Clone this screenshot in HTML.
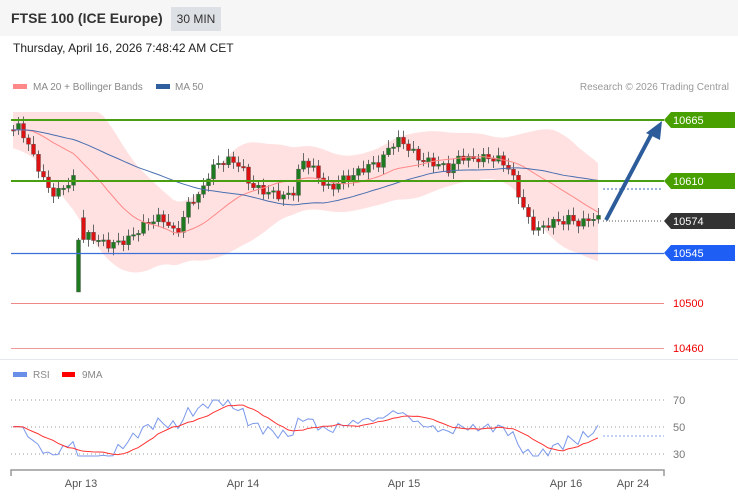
<!DOCTYPE html>
<html><head><meta charset="utf-8"><style>
body{margin:0;width:738px;height:500px;background:#fff;font-family:"Liberation Sans",sans-serif;overflow:hidden;position:relative}
.hdr{position:absolute;left:0;top:0;width:738px;height:36px;background:#f6f6f6}
.t{position:absolute;left:11px;top:10px;font-size:14px;font-weight:bold;color:#333}
.tag{position:absolute;left:171px;top:7px;width:50px;height:24px;background:#dde0e4;font-size:12px;color:#333;text-align:center;line-height:24px}
.date{position:absolute;left:13px;top:41px;font-size:12px;color:#222}
.sep{position:absolute;left:0;top:359px;width:738px;height:1px;background:#e4e8ee}
svg{position:absolute;left:0;top:0}
</style></head><body>
<div class="hdr"><div class="t">FTSE 100 (ICE Europe)</div><div class="tag">30 MIN</div></div>
<div class="date">Thursday, April 16, 2026 7:48:42 AM CET</div>
<div class="sep"></div>
<svg id="s" width="738" height="500" font-family="Liberation Sans, sans-serif">
<g id="band"></g><g id="c"></g>
<rect x="13" y="84" width="14" height="5" fill="#f88"/>
<text x="33" y="90" font-size="10" fill="#888">MA 20 + Bollinger Bands</text>
<rect x="156" y="84" width="14" height="5" fill="#2f5f9e"/>
<text x="175" y="90" font-size="10" fill="#888">MA 50</text>
<text x="729" y="90" font-size="10" fill="#999" text-anchor="end">Research © 2026 Trading Central</text>
<line x1="11" y1="120" x2="664" y2="120" stroke="#4a9e12" stroke-width="2"/>
<line x1="11" y1="181" x2="664" y2="181" stroke="#4a9e12" stroke-width="2"/>
<line x1="11" y1="253.5" x2="664" y2="253.5" stroke="#3d6fd8" stroke-width="1.2"/>
<line x1="11" y1="303.5" x2="664" y2="303.5" stroke="#e88" stroke-width="1"/>
<line x1="11" y1="348.5" x2="664" y2="348.5" stroke="#e99" stroke-width="1"/>
<line x1="603" y1="189" x2="662" y2="189" stroke="#3d6fb0" stroke-dasharray="2,2"/>
<line x1="603" y1="221" x2="662" y2="221" stroke="#555" stroke-dasharray="1,2"/>
<line x1="606" y1="220" x2="652" y2="133" stroke="#2d5c9a" stroke-width="4"/>
<polygon points="662,121 660,140 646,133" fill="#2d5c9a"/>
<polygon points="664,120 671,112 735,112 735,128 671,128" fill="#48a000"/>
<text x="673" y="124" font-size="11" fill="#fff">10665</text>
<polygon points="664,181 671,173 735,173 735,189 671,189" fill="#48a000"/>
<text x="673" y="185" font-size="11" fill="#fff">10610</text>
<polygon points="664,221 671,213 735,213 735,229 671,229" fill="#333"/>
<text x="673" y="225" font-size="11" fill="#fff">10574</text>
<polygon points="664,253 671,245 735,245 735,261 671,261" fill="#1e5ef5"/>
<text x="673" y="257" font-size="11" fill="#fff">10545</text>
<text x="673" y="307" font-size="11" fill="#e00">10500</text>
<text x="673" y="352" font-size="11" fill="#e00">10460</text>
<rect x="13" y="372" width="14" height="5" fill="#6a8fe8"/>
<text x="33" y="378" font-size="10" fill="#888">RSI</text>
<rect x="62" y="372" width="13" height="5" fill="#f00"/>
<text x="82" y="378" font-size="10" fill="#888">9MA</text>
<g stroke="#999" stroke-dasharray="1,3"><line x1="11" y1="400" x2="664" y2="400"/><line x1="11" y1="427" x2="664" y2="427"/><line x1="11" y1="454" x2="664" y2="454"/></g>
<text x="673" y="404" font-size="11" fill="#777">70</text><text x="673" y="431" font-size="11" fill="#777">50</text><text x="673" y="458" font-size="11" fill="#777">30</text>
<g id="r"></g>
<line x1="603" y1="436" x2="664" y2="436" stroke="#8aa6ee" stroke-dasharray="2,2"/>
<path d="M11,476V470H664V476" fill="none" stroke="#999" stroke-width="1.5"/>
<g font-size="11" fill="#555" text-anchor="middle"><text x="81" y="487">Apr 13</text><text x="243" y="487">Apr 14</text><text x="404" y="487">Apr 15</text><text x="566" y="487">Apr 16</text><text x="633" y="487">Apr 24</text></g>
</svg>
<script>
var K=[[13,130],[20,125],[25,140],[35,160],[45,185],[55,195],[65,185],[75,178],[80,240],[90,235],[100,242],[110,245],[120,242],[130,238],[140,228],[155,218],[165,220],[175,235],[180,225],[190,200],[200,195],[210,170],[220,162],[230,160],[240,165],[250,185],[260,190],[270,193],[285,197],[295,190],[300,160],[310,165],[320,180],[330,190],[340,180],[350,178],[360,170],[370,165],[380,163],[390,145],[400,140],[410,150],[420,160],[430,162],[440,165],[450,170],[460,155],[470,160],[480,158],[490,158],[500,160],[510,170],[520,200],[530,225],[540,230],[550,222],[560,222],[570,218],[580,225],[590,217],[601,220]];
function f(x){for(var i=1;i<K.length;i++)if(x<=K[i][0]){var a=K[i-1],b=K[i];return a[1]+(b[1]-a[1])*(x-a[0])/(b[0]-a[0]);}return 220;}
var c=document.getElementById('c'),h='';
var cl=[],xs=[];for(var x=13;x<=601;x+=5){xs.push(x);cl.push(f(x)+Math.sin(x*1.7)*4);}
var pre=[];for(var i=0;i<50;i++)pre.push(f(13)+Math.sin(i)*6);
var all=pre.concat(cl);
for(var i=0;i<cl.length;i++){var o=i?cl[i-1]:cl[0],C=cl[i],x=xs[i];var t=Math.min(o,C)-2-Math.abs(Math.sin(x))*6,b=Math.max(o,C)+2+Math.abs(Math.cos(x))*5;
if(x==78){o=292;C=240;t=238;b=292;}
var up=C<o;
h+='<line x1="'+(x+.5)+'" x2="'+(x+.5)+'" y1="'+t+'" y2="'+b+'" stroke="#666"/>';h+='<rect x="'+(x-1.5)+'" y="'+Math.min(o,C)+'" width="4" height="'+Math.max(1.5,Math.abs(C-o))+'" fill="'+(up?'#1e7a1e':'#d11')+'" stroke="#555" stroke-width=".4"/>';}
function ma(n){var r=[];for(var i=0;i<cl.length;i++){var s=0,k=i+50;for(var j=k-n+1;j<=k;j++)s+=all[j];r.push(s/n);}return r;}
var m20=ma(20),m50=ma(50),sds=[],up='',lo='',p20='',p50='';
for(var i=0;i<cl.length;i++){var sd=0,k=i+50;for(var j=k-19;j<=k;j++)sd+=Math.pow(all[j]-m20[i],2);sds.push(Math.sqrt(sd/20)*1.6+10);}
var ss=[];for(var i=0;i<sds.length;i++){var s=0,n=0;for(var j=Math.max(0,i-4);j<=Math.min(sds.length-1,i+4);j++){s+=sds[j];n++;}ss.push(s/n);}
for(var i=0;i<cl.length;i++){up+=xs[i]+','+Math.max(112,m20[i]-ss[i])+' ';lo=xs[i]+','+(m20[i]+ss[i])+' '+lo;p20+=(i?'L':'M')+xs[i]+','+m20[i];p50+=(i?'L':'M')+xs[i]+','+m50[i];}
document.getElementById('band').innerHTML='<polygon points="'+up+lo+'" fill="#ffe1e1"/>';
c.innerHTML=h+'<path d="'+p20+'" fill="none" stroke="#f88" stroke-width="1"/><path d="'+p50+'" fill="none" stroke="#4a6fb0" stroke-width="1"/>';
var rs='',rm='',rv=[];for(var i=0;i<cl.length;i++){var v=427-(m20[i]-cl[i])*0.55+Math.sin(i*2.3)*4;v=Math.max(400,Math.min(456,v));rv.push(v);rs+=(i?'L':'M')+xs[i]+','+v;}
for(var i=0;i<rv.length;i++){var s=0,k=0;for(var j=Math.max(0,i-8);j<=i;j++){s+=rv[j];k++;}rm+=(i?'L':'M')+xs[i]+','+(s/k);}
document.getElementById('r').innerHTML='<path d="'+rs+'" fill="none" stroke="#7a98ea" stroke-width="1"/><path d="'+rm+'" fill="none" stroke="#f33" stroke-width="1"/>';
</script>
</body></html>
